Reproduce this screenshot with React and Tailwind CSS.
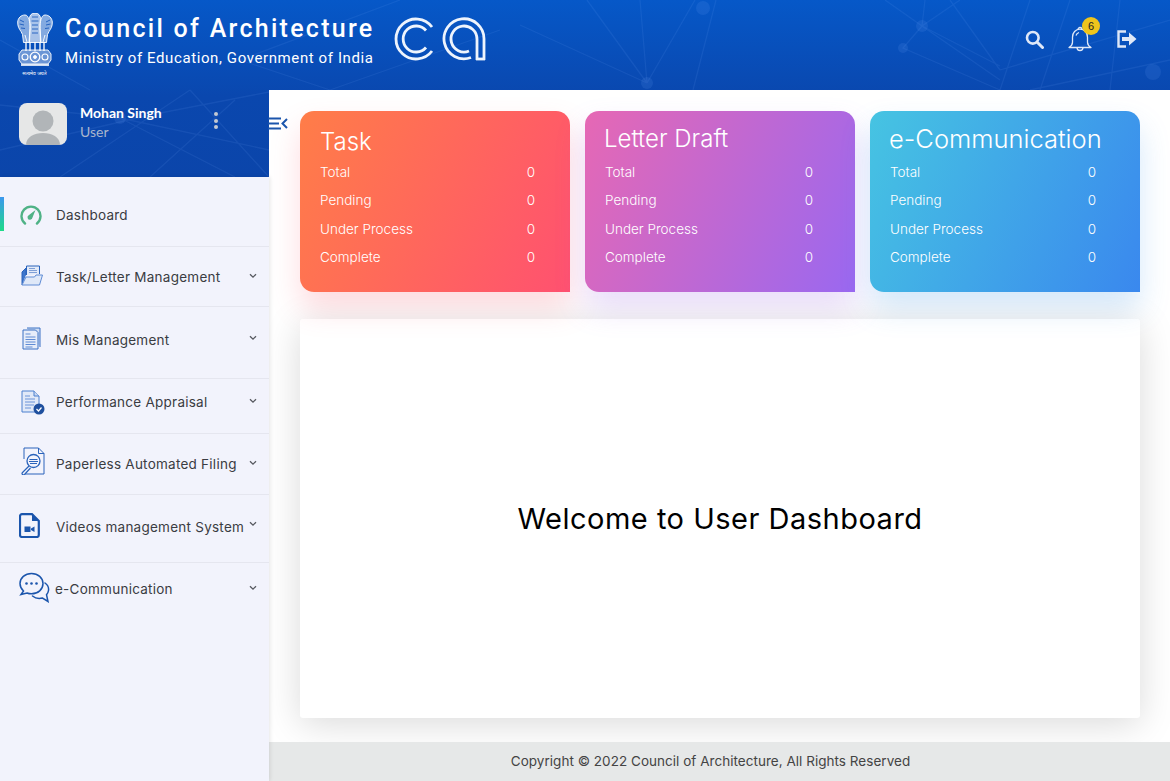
import React from "react";

const mont = "font-['Inter','Liberation_Sans',sans-serif]";
const pop = "font-['Inter','Open_Sans',sans-serif]";

const Emblem = () => (
  <svg width="36" height="55" viewBox="0 0 36 55" fill="none" stroke="#fff" strokeWidth=".9" className="block">
    {/* lions */}
    <path d="M8 2C4 2 1 5 .7 9c-.3 4 1.500 7 3.300 9.500l1.500 3 1 8h6l.5-14c0-6-1-13.500-5-13.500z" fill="#fff" fillOpacity=".5" />
    <path d="M28 2c4 0 7 3 7.300 7 .3 4-1.500 7-3.300 9.500l-1.500 3-1 8h-6l-.5-14c0-6 1-13.500 5-13.500z" fill="#fff" fillOpacity=".5" />
    <path d="M18 0c-3.500 0-5.500 2.500-5.500 5.500 0 3.500 1 6 .5 10l-1 14h12l-1-14c-.5-4 .5-6.500.5-10C23.500 2.500 21.500 0 18 0z" fill="#fff" fillOpacity=".65" />
    <path d="M3 7l4 2M2.500 11l4.500 1M4 15l4 .5M33 7l-4 2M33.500 11l-4.500 1M32 15l-4 .5M15 4h6M14.500 8h7M15 12h6M15 16h6M15 20h6" stroke="#0b4fb8" strokeWidth=".8" />
    <path d="M9 29v9M13 29v9M18 29v9M23 29v9M27 29v9" strokeWidth="1.300" />
    <path d="M8 22l2 7M28 22l-2 7" />
    {/* abacus */}
    <path d="M5 37h26l3 4v6l-3 4H5l-3-4v-6z" fill="#fff" fillOpacity=".4" />
    <circle cx="18" cy="44" r="4.800" strokeWidth="1.300" />
    <circle cx="18" cy="44" r="1.500" fill="#fff" />
    <circle cx="8" cy="44" r="3" strokeWidth="1.100" />
    <circle cx="28" cy="44" r="3" strokeWidth="1.100" />
    <path d="M4 52h28" strokeWidth="1.600" />
  </svg>
);

const CaLogo = () => (
  <svg width="94" height="44" viewBox="0 0 94 44" fill="none" stroke="#eef4fd" strokeWidth="2.800">
    <path d="M38 10A20 20 0 1 0 38 34" />
    <path d="M32 13.500A13 13 0 1 0 32 30.500" />
    <path d="M90 43V22A20 20 0 1 0 77 40.500" />
    <path d="M83 43V22A13 13 0 1 0 75 34" />
    <path d="M82 42h9" />
  </svg>
);

const NetworkLines = () => (
  <svg className="absolute inset-0" width="1170" height="177" viewBox="0 0 1170 177" fill="none" stroke="#7fb0ff" strokeOpacity=".1" strokeWidth="1.300">
    <path d="M647 83L587 0M647 83L640 0M647 83L695 0M647 83L520 25M716 0L693 90" />
    <path d="M922 26L903 48L1000 90M922 26L1000 80M922 26L1000 66M922 26L885 0M922 26L925 0M922 26L960 0M950 0L1000 70" />
    <path d="M1000 90L1030 0M1000 70L1170 20M1040 90L1070 0M1110 90L1120 0M1170 60L1030 90" />
    <path d="M0 105L120 118L269 150M0 150L150 115L269 92M60 177L190 90M190 90L269 177M120 118L235 177M235 100L150 177M0 40L90 90" />
    <path d="M240 60L400 0M240 60L330 90M330 90L500 30" />
    <g fill="#7fb0ff" fillOpacity=".12" stroke="none">
      <circle cx="647" cy="83" r="6" />
      <circle cx="703" cy="8" r="7" />
      <circle cx="922" cy="26" r="6" />
      <circle cx="903" cy="48" r="5" />
      <circle cx="1153" cy="72" r="8" />
      <circle cx="120" cy="118" r="6" />
    </g>
  </svg>
);

const Gauge = ({ className }) => (
  <svg className={className} width="22" height="20" viewBox="0 0 22 20" fill="none">
    <path d="M5 18.500A9.500 9.500 0 1 1 17 18.500" stroke="#4fb286" strokeWidth="2.400" strokeLinecap="round" />
    <path d="M15.500 5l-3 7.500a2.500 2.500 0 1 1-3.500-2.500z" fill="#4fb286" />
  </svg>
);

const Folder = ({ className }) => (
  <svg className={className} width="22" height="21" viewBox="0 0 22 21" fill="none" stroke="#2a63bb" strokeWidth="1">
    <path d="M5.500 10V1h13v8" fill="#e3eaf8" />
    <path d="M8 3.500h6M8 5.500h8M8 7.500h8" stroke="#7f9fd6" />
    <path d="M1 20V7l4-4v7" fill="#3e76cc" />
    <path d="M1 20h17.500l3-10H15l-1.500 2H5z" fill="#dfe8f8" stroke="#5f8bd4" />
  </svg>
);

const Docs = ({ className }) => (
  <svg className={className} width="19" height="23" viewBox="0 0 19 23" fill="none" stroke="#3b70c4" strokeWidth="1">
    <path d="M5 1h13v19" fill="#cfdcf3" />
    <path d="M1 3h12.500L16 5.500V22H1z" fill="#e7edf9" />
    <path d="M3.500 7h5M3.500 10h10M3.500 12.500h10M3.500 15h10M3.500 17.500h10M3.500 20h7" stroke="#5f8bd4" />
  </svg>
);

const DocCheck = ({ className }) => (
  <svg className={className} width="24" height="25" viewBox="0 0 24 25" fill="none">
    <path d="M1 1h12l5 5v16H1z" fill="#e1e9f8" stroke="#4d80cf" />
    <path d="M13 1v5h5" fill="#c9d8f2" stroke="#4d80cf" />
    <path d="M4 6h5M4 9h10M4 12h10M4 15h9M4 18h6" stroke="#6a93d8" />
    <circle cx="18" cy="19" r="5.500" fill="#1f4f9e" />
    <path d="M15.500 19l2 2 3-3.500" stroke="#fff" strokeWidth="1.200" />
  </svg>
);

const DocSearch = ({ className }) => (
  <svg className={className} width="25" height="28" viewBox="0 0 25 28" fill="none" stroke="#2a63bb" strokeWidth="1">
    <path d="M4 12V1h14.500l5.500 5.500V27H5" />
    <path d="M18.500 1v5.500H24" />
    <circle cx="13.500" cy="14" r="6.500" fill="#f2f3fc" strokeWidth="1.300" />
    <path d="M9.500 12.500h8M9 14.500h9M10 16.500h7" />
    <path d="M9 19l-6.500 6.500a1.400 1.400 0 0 0 2 2L10.500 21" strokeWidth="1.200" />
  </svg>
);

const VideoDoc = ({ className }) => (
  <svg className={className} width="21" height="25" viewBox="0 0 21 25" fill="none">
    <path d="M3 1.200h10l6.800 6.800v14a2 2 0 0 1-2 2H3a2 2 0 0 1-2-2V3.200a2 2 0 0 1 2-2z" fill="#f2f3fc" stroke="#1b55ac" strokeWidth="2.200" />
    <path d="M13 1.500V8h6.500z" fill="#1b55ac" />
    <path d="M5.500 13.500h6v5.500h-6zM12 15.500l3.500-2v5.500l-3.500-2z" fill="#1b55ac" />
  </svg>
);

const Chat = ({ className }) => (
  <svg className={className} width="31" height="31" viewBox="0 0 31 31" fill="none" stroke="#1b55ac" strokeWidth="1.500" strokeLinecap="round">
    <path d="M12.500 1.500C6 1.500 1 6 1 11.500c0 3 1.500 5.500 3.500 7.500L2 22.500l6-1.500c1.500.6 3 .8 4.500.8 6.500 0 11.500-4.500 11.500-10.300S19 1.500 12.500 1.500z" />
    <path d="M26 11c2.500 1.800 4 4.300 3.500 7.500-.2 1.700-1 3-2 4.200l1.500 6.800-5.500-3.500c-3 .8-7 .5-10-2" />
    <g fill="#1b55ac" stroke="none">
      <circle cx="7.500" cy="11.500" r="1.300" />
      <circle cx="12.500" cy="11.500" r="1.300" />
      <circle cx="17.500" cy="11.500" r="1.300" />
    </g>
  </svg>
);

const Chevron = ({ className }) => (
  <svg className={className} width="8" height="6" viewBox="0 0 8 6" fill="none" stroke="#55585f" strokeWidth="1.300">
    <path d="M1 1.200l3 3 3-3" />
  </svg>
);

const navItems = [
  { label: "Dashboard", Icon: Gauge, row: "h-[70px] pt-[28px]", icon: "ml-[20px] mr-[14px]" },
  { label: "Task/Letter Management", Icon: Folder, row: "h-[60px] pt-[20px]", icon: "ml-[21px] mr-[13px] -mt-[3px]", arrow: "mt-[6px]" },
  { label: "Mis Management", Icon: Docs, row: "h-[72px] pt-[23px]", icon: "ml-[22px] mr-[15px] -mt-[3px]", arrow: "mt-[5px]" },
  { label: "Performance Appraisal", Icon: DocCheck, row: "h-[55px] pt-[13px]", icon: "ml-[21px] mr-[11px]", arrow: "mt-[6px]" },
  { label: "Paperless Automated Filing", Icon: DocSearch, row: "h-[61px] pt-[20px]", icon: "ml-[20px] mr-[11px] -mt-[6px]", arrow: "mt-[6px]" },
  { label: "Videos management System", Icon: VideoDoc, row: "h-[68px] pt-[22px]", icon: "ml-[19px] mr-[16px] -mt-[3px]", arrow: "mt-[4px]" },
  { label: "e-Communication", Icon: Chat, row: "h-[60px] pt-[16px]", icon: "ml-[19px] mr-[5px] -mt-[4px]", arrow: "mt-[6px]" },
];

const cards = [
  {
    title: "Task",
    bg: "bg-[linear-gradient(115deg,#ff7d48,#ff5170)]",
    shadow: "shadow-[0_16px_30px_rgba(255,90,110,0.22)]",
    head: "pl-[20px] pt-[15px] text-[24px]",
    body: "pl-[20px] pr-[35px]",
  },
  {
    title: "Letter Draft",
    bg: "bg-[linear-gradient(115deg,#e668b4,#9a68f0)]",
    shadow: "shadow-[0_16px_30px_rgba(160,100,235,0.22)]",
    head: "pl-[19px] pt-[12px] text-[24px]",
    body: "pl-[20px] pr-[42px]",
  },
  {
    title: "e-Communication",
    bg: "bg-[linear-gradient(115deg,#46c4e2,#3a88ee)]",
    shadow: "shadow-[0_16px_30px_rgba(60,150,235,0.22)]",
    head: "pl-[19px] pt-[12px] text-[25.500px]",
    body: "pl-[20px] pr-[44px]",
  },
];

const stats = ["Total", "Pending", "Under Process", "Complete"];

const StatCard = ({ card }) => (
  <div className={`h-[181px] w-[270px] rounded-tl-[14px] rounded-tr-[14px] rounded-bl-[14px] text-white ${pop} ${card.bg} ${card.shadow}`}>
    <div className={`h-[47px] font-light leading-[32px] ${card.head}`}>{card.title}</div>
    <div className={card.body}>
      {stats.map((s) => (
        <div key={s} className="flex h-[28.300px] items-center justify-between text-[13.500px] font-light">
          <span>{s}</span>
          <span>0</span>
        </div>
      ))}
    </div>
  </div>
);

const App = () => {
  return (
    <div className="relative h-[781px] w-full overflow-hidden bg-white">
      {/* blue band behind the header and the profile box */}
      <div className="absolute left-0 top-0 h-[177px] w-full bg-[linear-gradient(180deg,#0658c8_0%,#0a47ae_55%,#0b45aa_100%)]">
        <NetworkLines />
      </div>

      <header className="relative flex h-[90px] items-center justify-between pb-[8px] pl-[17px] pr-[33px]">
        <div className="flex items-center">
          <div className="flex w-[35px] flex-col items-center pt-[8px]">
            <Emblem />
            <span className="mt-[1px] whitespace-nowrap font-['Noto_Sans',sans-serif] text-[5px] leading-[8px] text-white">सत्यमेव जयते</span>
          </div>
          <div className="ml-[13px] font-['Roboto',sans-serif] text-white">
            <div className="text-[25px] font-medium leading-[32px] tracking-[2.28px]">Council of Architecture</div>
            <div className="mt-[2px] text-[15px] leading-[22px] tracking-[0.6px]">Ministry of Education, Government of India</div>
          </div>
          <div className="ml-[20px] -mt-[4px]">
            <CaLogo />
          </div>
        </div>
        <div className="mb-[4px] flex items-center">
          <svg width="19" height="19" viewBox="0 0 19 19" fill="none" stroke="#dfe8f8" strokeWidth="2.600" strokeLinecap="round">
            <circle cx="7.800" cy="7.800" r="5.800" />
            <path d="M12.500 12.500l5 5" strokeWidth="3" />
          </svg>
          <div className="relative ml-[24px] h-[28px] w-[24px]">
            <svg width="24" height="28" viewBox="0 0 24 28" fill="none" stroke="#dfe8f8" strokeWidth="1.300" strokeLinejoin="round">
              <path d="M10 4.500a2 2 0 1 1 4 0" />
              <path d="M12 4.200c-4.500 0-7.500 3.500-7.500 8v5c0 2-1.500 4-3.500 5.300h22c-2-1.300-3.500-3.300-3.500-5.300v-5c0-4.500-3-8-7.500-8z" />
              <path d="M8 10.500c.5-1.500 1.500-2.500 3-3" />
              <path d="M9 22.500a3 3 0 0 0 6 0" />
            </svg>
            <span className="absolute -right-[8px] -top-[8px] flex h-[18px] w-[18px] items-center justify-center rounded-full bg-[#eec41c] font-['Liberation_Sans',sans-serif] text-[11px] text-[#222]">6</span>
          </div>
          <svg className="ml-[25px]" width="20" height="18" viewBox="0 0 20 18" fill="none">
            <path d="M9 1.500H1.500v15H9" stroke="#dfe8f8" strokeWidth="2.400" />
            <path d="M5 7h7V2.500L19.500 9 12 15.500V11H5z" fill="#dfe8f8" />
          </svg>
        </div>
      </header>

      <div className="relative flex h-[691px]">
        <aside className="z-10 flex w-[269px] shrink-0 flex-col">
          <div className="flex h-[87px] items-start pl-[19px] pt-[13px]">
            <div className="flex h-[42px] w-[48px] items-end justify-center overflow-hidden rounded-lg bg-[#e6e7e7]">
              <svg width="40" height="36" viewBox="0 0 40 36" fill="#b1b5b8">
                <circle cx="20" cy="12" r="10.500" />
                <path d="M3 36c0-8 8-12 17-12s17 4 17 12z" />
              </svg>
            </div>
            <div className="ml-[13px] w-[134px] font-['Lato',sans-serif]">
              <div className="text-[14px] font-bold leading-[20px] text-white">Mohan Singh</div>
              <div className="text-[14px] leading-[18px] text-[#a9b6cd]">User</div>
            </div>
            <div className="mt-[9px] flex flex-col gap-[2.500px]">
              <span className="h-[4px] w-[4px] rounded-full bg-[#c3c9d2]" />
              <span className="h-[4px] w-[4px] rounded-full bg-[#c3c9d2]" />
              <span className="h-[4px] w-[4px] rounded-full bg-[#c3c9d2]" />
            </div>
          </div>

          <nav className={`relative flex-1 bg-[#f2f3fc] shadow-[1px_0_4px_rgba(0,0,0,0.1)] ${mont}`}>
            <span className="absolute left-0 top-[20px] h-[34px] w-[4px] bg-[linear-gradient(180deg,#3c97ee,#1edb88)]" />
            {navItems.map(({ label, Icon, row, icon, arrow }, i) => (
              <div key={label} className={`flex items-start ${i < 6 ? "border-b border-[#e5e6ef]" : ""} ${row}`}>
                <div className="flex h-[20px] items-center">
                  <Icon className={`shrink-0 ${icon}`} />
                </div>
                <span className="whitespace-nowrap text-[13.500px] leading-[20px] tracking-[0.25px] text-[#3a3c42]">{label}</span>
                {arrow && <Chevron className={`absolute left-[249px] ${arrow}`} />}
              </div>
            ))}
          </nav>
        </aside>

        <main className="relative flex flex-1 flex-col bg-white">
          <svg className="absolute -left-[1px] top-[27px] z-20" width="20" height="13" viewBox="0 0 20 13" fill="none" stroke="#1b55ac" strokeWidth="2">
            <path d="M0 1.500h13M0 6.500h11M0 11.500h13M19 2l-4.500 4.500L19 11" />
          </svg>
          <div className="flex-1 pl-[31px] pr-[30px] pt-[21px]">
            <div className="flex gap-[15px]">
              {cards.map((c) => (
                <StatCard key={c.title} card={c} />
              ))}
            </div>
            <div className={`mt-[27px] flex h-[399px] items-center justify-center rounded-[3px] bg-white text-[29px] tracking-[0.5px] text-black shadow-[0_6px_36px_rgba(0,0,0,0.15)] ${mont}`}>
              Welcome to User Dashboard
            </div>
          </div>
          <footer className={`relative flex h-[39px] items-center justify-center bg-[#e6e8e8] pr-[18px] text-[13.500px] tracking-[0.03px] text-[#444] ${mont}`}>
            Copyright © 2022 Council of Architecture, All Rights Reserved
          </footer>
        </main>
      </div>
    </div>
  );
};

export default App;
